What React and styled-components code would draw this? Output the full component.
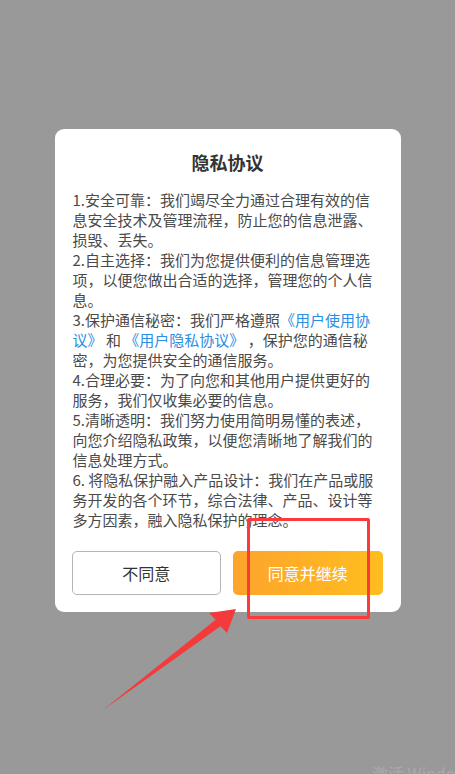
import React from "react";
import styled, { createGlobalStyle } from "styled-components";

const GlobalStyle = createGlobalStyle`
  html, body {
    margin: 0;
    padding: 0;
  }
  body {
    font-family: "Noto Sans CJK SC", "Noto Sans", sans-serif;
  }
`;

const Screen = styled.div`
  position: relative;
  height: 774px;
  overflow: hidden;
  box-sizing: border-box;
  padding-top: 129px;
  background: #999999;
`;

const Dialog = styled.div`
  width: 346px;
  margin: 0 auto;
  box-sizing: border-box;
  padding: 20px 0 17px;
  background: #ffffff;
  border-radius: 9px;
`;

const Title = styled.h2`
  margin: 0 0 15px;
  font-size: 18px;
  line-height: 26px;
  font-weight: 700;
  text-align: center;
  color: #333333;
`;

const Body = styled.div`
  width: 304px;
  padding-left: 18px;
  font-size: 15px;
  line-height: 20px;
  color: #4a4a4a;
`;

const Item = styled.p`
  margin: 0;
`;

const Link = styled.span`
  color: #2a8ee2;
`;

const Actions = styled.div`
  display: grid;
  grid-template-columns: 1fr 1fr;
  gap: 12px;
  margin-top: 21px;
  padding: 0 18px 0 17px;
`;

const Button = styled.button`
  height: 44px;
  border-radius: 5px;
  font-family: inherit;
  font-size: 16px;
  cursor: pointer;
  border: ${(p) => (p.$primary ? "none" : "1px solid #b5b5b5")};
  background: ${(p) =>
    p.$primary ? "linear-gradient(90deg, #fda42c 0%, #ffbd1f 100%)" : "#ffffff"};
  color: ${(p) => (p.$primary ? "#ffffff" : "#333333")};
`;

const Highlight = styled.div`
  position: absolute;
  left: 247px;
  top: 518px;
  width: 123px;
  height: 101px;
  box-sizing: border-box;
  border: 3px solid #fc3a3c;
  border-radius: 2px;
`;

const Arrow = styled.svg`
  position: absolute;
  left: 0;
  top: 0;
  pointer-events: none;
`;

const Watermark = styled.div`
  position: absolute;
  left: 372px;
  top: 761px;
  font-size: 16px;
  white-space: nowrap;
  color: #a9a9a9;
`;

export default function App() {
  return (
    <>
      <GlobalStyle />
      <Screen>
        <Dialog>
          <Title>隐私协议</Title>
          <Body>
            <Item>1.安全可靠：我们竭尽全力通过合理有效的信息安全技术及管理流程，防止您的信息泄露、损毁、丢失。</Item>
            <Item>2.自主选择：我们为您提供便利的信息管理选项，以便您做出合适的选择，管理您的个人信息。</Item>
            <Item>
              3.保护通信秘密：我们严格遵照<Link>《用户使用协议》</Link> 和 <Link>《用户隐私协议》</Link> ，保护您的通信秘密，为您提供安全的通信服务。
            </Item>
            <Item>4.合理必要：为了向您和其他用户提供更好的服务，我们仅收集必要的信息。</Item>
            <Item>5.清晰透明：我们努力使用简明易懂的表述，向您介绍隐私政策，以便您清晰地了解我们的信息处理方式。</Item>
            <Item>6. 将隐私保护融入产品设计：我们在产品或服务开发的各个环节，综合法律、产品、设计等多方因素，融入隐私保护的理念。</Item>
          </Body>
          <Actions>
            <Button>不同意</Button>
            <Button $primary>同意并继续</Button>
          </Actions>
        </Dialog>
        <Highlight />
        <Arrow width="455" height="774" viewBox="0 0 455 774">
          <path d="M103 710 L215.6 619.8 L209 613 L236 609 L227 633 L220.4 626.2 Z" fill="#f53a3b" />
        </Arrow>
        <Watermark>激活 Windows</Watermark>
      </Screen>
    </>
  );
}
